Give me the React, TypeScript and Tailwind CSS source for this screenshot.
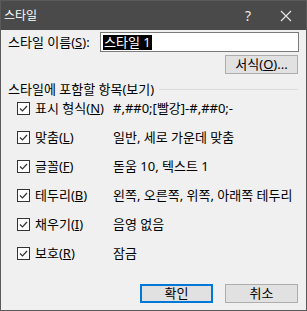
const rows: { label: string; key: string; rest: string; value: string }[] = [
  { label: "표시 형식(", key: "N", rest: ")", value: "#,##0;[빨강]-#,##0;-" },
  { label: "맞춤(", key: "L", rest: ")", value: "일반, 세로 가운데 맞춤" },
  { label: "글꼴(", key: "F", rest: ")", value: "돋움 10, 텍스트 1" },
  { label: "테두리(", key: "B", rest: ")", value: "왼쪽, 오른쪽, 위쪽, 아래쪽 테두리" },
  { label: "채우기(", key: "I", rest: ")", value: "음영 없음" },
  { label: "보호(", key: "R", rest: ")", value: "잠금" },
];

function CheckBox() {
  return (
    <span className="flex h-[13px] w-[13px] shrink-0 items-center justify-center border border-[#333333] bg-white">
      <svg width="11" height="11" viewBox="0 0 11 11">
        <path d="M2 5.5 L4.5 8 L9 3" fill="none" stroke="#333333" strokeWidth="1.2" />
      </svg>
    </span>
  );
}

export default function App() {
  return (
    <div className="flex h-[311px] w-[307px] flex-col border border-[#5a5a5a] bg-[#f0f0f0] font-['Noto_Sans','Noto_Sans_CJK_KR',sans-serif] text-[13px] leading-[15px] text-black">
      <div className="flex h-[29px] shrink-0 items-center bg-[#4a4a4a] pl-[3px] text-white">
        <span className="text-[12px]">스타일</span>
        <span className="ml-auto mr-[29px] text-[14px] text-[#e8e8e8]">?</span>
        <svg className="mr-[14px]" width="12" height="12" viewBox="0 0 12 12">
          <path d="M1 1 L11 11 M11 1 L1 11" stroke="#e8e8e8" strokeWidth="1.1" />
        </svg>
      </div>

      <div className="flex flex-col px-[7px] pt-[2px]">
        <div className="flex h-[20px] items-center">
          <span className="whitespace-nowrap">
            스타일 이름(<span className="underline">S</span>):
          </span>
          <div className="ml-auto flex h-[20px] w-[199px] items-center border border-[#7a7a7a] bg-white pl-[2px]">
            <span className="bg-black px-[1px] text-white">스타일 1</span>
          </div>
        </div>

        <div className="mt-[3px] flex justify-end pr-[1px]">
          <button className="flex h-[19px] w-[73px] items-center justify-center border border-[#adadad] bg-[#e1e1e1]">
            <span className="whitespace-nowrap">
              서식(<span className="underline">O</span>)...
            </span>
          </button>
        </div>

        <div className="mt-[8px] flex h-[14px] items-center">
          <span className="whitespace-nowrap">스타일에 포함할 항목(보기)</span>
          <div className="ml-[5px] mr-[1px] h-px flex-1 bg-[#dcdcdc]" />
        </div>

        <div className="mt-[2px] flex flex-col gap-[9px] pl-[9px]">
          {rows.map((r) => (
            <div key={r.key} className="flex h-[20px] items-center whitespace-nowrap">
              <CheckBox />
              <span className="ml-[5px] w-[78px] shrink-0">
                {r.label}
                <span className="underline">{r.key}</span>
                {r.rest}
              </span>
              <span>{r.value}</span>
            </div>
          ))}
        </div>

        <div className="mt-[21px] flex justify-end gap-[12px] pr-[1px]">
          <button className="flex h-[19px] w-[73px] items-center justify-center border-2 border-[#0078d7] bg-[#e1e1e1]">
            확인
          </button>
          <button className="flex h-[19px] w-[73px] items-center justify-center border border-[#adadad] bg-[#e1e1e1]">
            취소
          </button>
        </div>
      </div>
    </div>
  );
}
